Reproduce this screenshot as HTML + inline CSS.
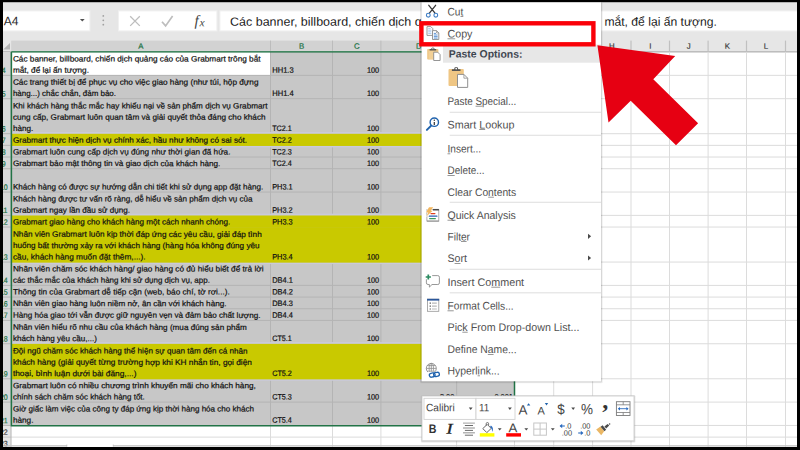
<!DOCTYPE html>
<html lang="vi"><head><meta charset="utf-8"><title>Excel - Copy</title>
<style>
html,body{margin:0;padding:0;background:#000;}
body{width:800px;height:450px;overflow:hidden;}
svg{display:block;font-family:"Liberation Sans",sans-serif;}
text{white-space:pre;}
.u{text-decoration:underline;text-decoration-thickness:0.7px;text-underline-offset:0.9px;}
</style></head><body>
<svg width="800" height="450" viewBox="0 0 800 450">
<rect x="0" y="0" width="800" height="450" fill="#000"/>
<rect x="3" y="2.5" width="794" height="444.5" fill="#fff"/>
<rect x="3" y="2.5" width="794" height="48.5" fill="#e6e6e6"/>
<rect x="1" y="10.9" width="88.9" height="20" fill="#fff" stroke="#f0f0f0" stroke-width="1"/>
<text transform="translate(3.8,25.2) rotate(.03) scale(0.98,1)" font-size="12.3" fill="#2b2b2b">A4</text>
<path d="M79.9 18.9h4.8l-2.4 2.7z" fill="#505050"/>
<rect x="102.4" y="15" width="1.8" height="1.8" fill="#a0a0a0" rx="0.9"/>
<rect x="102.4" y="19.4" width="1.8" height="1.8" fill="#a0a0a0" rx="0.9"/>
<rect x="102.4" y="23.8" width="1.8" height="1.8" fill="#a0a0a0" rx="0.9"/>
<rect x="118.5" y="10.9" width="98.4" height="20" fill="#fff" stroke="#f0f0f0" stroke-width="1"/>
<path d="M130.2 16.3l9.6 9.6M139.8 16.3l-9.6 9.6" stroke="#bdbdbd" stroke-width="1.3" fill="none"/>
<path d="M162 21.7l3.6 4.2 7-9.8" stroke="#bdbdbd" stroke-width="1.7" fill="none"/>
<text transform="translate(194.6,25.6) rotate(.03) scale(1,1)" font-size="15" fill="#444" font-family="Liberation Serif, serif" font-style="italic">f<tspan font-size="11.6" dx="0.7" dy="0.6">x</tspan></text>
<rect x="219.9" y="10.9" width="579.1" height="20" fill="#fff" stroke="#f0f0f0" stroke-width="1"/>
<clipPath id="fc"><rect x="225" y="11" width="374" height="20"/></clipPath>
<g clip-path="url(#fc)">
<text transform="translate(230,25.7) rotate(.03) scale(1.0416,1)" font-size="12" fill="#222">Các banner, billboard, chiến dịch quảng cáo của Grabmart trông bắt</text>
</g>
<text transform="translate(604.4,25.7) rotate(.03) scale(1.0117,1)" font-size="12" fill="#222">mắt, để lại ấn tượng.</text>
<rect x="11.2" y="40.6" width="503.3" height="10.2" fill="#d2d2d2"/>
<path d="M10 42.9v6.7H3.2z" fill="#b2b2b2"/>
<rect x="514.5" y="51.1" width="282.5" height="1.4" fill="#b6b6b6"/>
<rect x="3" y="51.1" width="8.2" height="1.4" fill="#b6b6b6"/>
<rect x="270" y="40.6" width="1" height="10.2" fill="#bcbcbc"/>
<rect x="332" y="40.6" width="1" height="10.2" fill="#bcbcbc"/>
<rect x="380.4" y="40.6" width="1" height="10.2" fill="#bcbcbc"/>
<rect x="456.1" y="40.6" width="1" height="10.2" fill="#bcbcbc"/>
<text transform="translate(140.85,48.8) rotate(.03) scale(1,1)" font-size="7.8" fill="#217346" text-anchor="middle" stroke="#217346" stroke-width="0.2">A</text>
<text transform="translate(301.5,48.8) rotate(.03) scale(1,1)" font-size="7.8" fill="#217346" text-anchor="middle" stroke="#217346" stroke-width="0.2">B</text>
<text transform="translate(356.7,48.8) rotate(.03) scale(1,1)" font-size="7.8" fill="#217346" text-anchor="middle" stroke="#217346" stroke-width="0.2">C</text>
<text transform="translate(418.75,48.8) rotate(.03) scale(1,1)" font-size="7.8" fill="#217346" text-anchor="middle" stroke="#217346" stroke-width="0.2">D</text>
<text transform="translate(485.55,48.8) rotate(.03) scale(1,1)" font-size="7.8" fill="#217346" text-anchor="middle" stroke="#217346" stroke-width="0.2">E</text>
<text transform="translate(534.1,48.8) rotate(.03) scale(1,1)" font-size="7.8" fill="#3c3c3c" text-anchor="middle" stroke="#3c3c3c" stroke-width="0.2">F</text>
<rect x="553.1" y="40.6" width="1.2" height="10.6" fill="#c0c0c0"/>
<text transform="translate(573.15,48.8) rotate(.03) scale(1,1)" font-size="7.8" fill="#3c3c3c" text-anchor="middle" stroke="#3c3c3c" stroke-width="0.2">G</text>
<rect x="592" y="40.6" width="1.2" height="10.6" fill="#c0c0c0"/>
<text transform="translate(611.8,48.8) rotate(.03) scale(1,1)" font-size="7.8" fill="#3c3c3c" text-anchor="middle" stroke="#3c3c3c" stroke-width="0.2">H</text>
<rect x="630.4" y="40.6" width="1.2" height="10.6" fill="#c0c0c0"/>
<text transform="translate(650.25,48.8) rotate(.03) scale(1,1)" font-size="7.8" fill="#3c3c3c" text-anchor="middle" stroke="#3c3c3c" stroke-width="0.2">I</text>
<rect x="668.9" y="40.6" width="1.2" height="10.6" fill="#c0c0c0"/>
<text transform="translate(688.8,48.8) rotate(.03) scale(1,1)" font-size="7.8" fill="#3c3c3c" text-anchor="middle" stroke="#3c3c3c" stroke-width="0.2">J</text>
<rect x="707.5" y="40.6" width="1.2" height="10.6" fill="#c0c0c0"/>
<text transform="translate(727.3,48.8) rotate(.03) scale(1,1)" font-size="7.8" fill="#3c3c3c" text-anchor="middle" stroke="#3c3c3c" stroke-width="0.2">K</text>
<rect x="745.9" y="40.6" width="1.2" height="10.6" fill="#c0c0c0"/>
<text transform="translate(766,48.8) rotate(.03) scale(1,1)" font-size="7.8" fill="#3c3c3c" text-anchor="middle" stroke="#3c3c3c" stroke-width="0.2">L</text>
<rect x="784.9" y="40.6" width="1.2" height="10.6" fill="#c0c0c0"/>
<rect x="3" y="52" width="8.2" height="373.44" fill="#d8d8d8"/>
<rect x="3" y="425.44" width="8.2" height="21.56" fill="#e6e6e6"/>
<rect x="11.2" y="52" width="503.3" height="373.44" fill="#c7c7c7"/>
<rect x="11.2" y="74.84" width="503.3" height="1" fill="#b4b4b4"/>
<rect x="11.2" y="98.18" width="503.3" height="1" fill="#b4b4b4"/>
<rect x="11.2" y="133.19" width="503.3" height="1" fill="#b4b4b4"/>
<rect x="11.2" y="144.86" width="503.3" height="1" fill="#b4b4b4"/>
<rect x="11.2" y="156.53" width="503.3" height="1" fill="#b4b4b4"/>
<rect x="11.2" y="168.2" width="503.3" height="1" fill="#b4b4b4"/>
<rect x="11.2" y="191.54" width="503.3" height="1" fill="#b4b4b4"/>
<rect x="11.2" y="214.88" width="503.3" height="1" fill="#b4b4b4"/>
<rect x="11.2" y="226.55" width="503.3" height="1" fill="#b4b4b4"/>
<rect x="11.2" y="261.56" width="503.3" height="1" fill="#b4b4b4"/>
<rect x="11.2" y="284.9" width="503.3" height="1" fill="#b4b4b4"/>
<rect x="11.2" y="296.57" width="503.3" height="1" fill="#b4b4b4"/>
<rect x="11.2" y="308.24" width="503.3" height="1" fill="#b4b4b4"/>
<rect x="11.2" y="319.91" width="503.3" height="1" fill="#b4b4b4"/>
<rect x="11.2" y="343.25" width="503.3" height="1" fill="#b4b4b4"/>
<rect x="11.2" y="378.26" width="503.3" height="1" fill="#b4b4b4"/>
<rect x="11.2" y="401.6" width="503.3" height="1" fill="#b4b4b4"/>
<rect x="270" y="52" width="1" height="373.44" fill="#b4b4b4"/>
<rect x="332" y="52" width="1" height="373.44" fill="#b4b4b4"/>
<rect x="380.4" y="52" width="1" height="373.44" fill="#b4b4b4"/>
<rect x="456.1" y="52" width="1" height="373.44" fill="#b4b4b4"/>
<rect x="11.2" y="131.99" width="503.3" height="15.37" fill="#cacada"/>
<rect x="11.2" y="213.68" width="503.3" height="15.37" fill="#cacada"/>
<rect x="11.2" y="225.35" width="503.3" height="38.71" fill="#cacada"/>
<rect x="11.2" y="342.05" width="503.3" height="38.71" fill="#cacada"/>
<rect x="11.2" y="133.79" width="503.3" height="12.17" fill="#c9c900"/>
<rect x="11.2" y="215.48" width="503.3" height="12.17" fill="#c9c900"/>
<rect x="11.2" y="227.15" width="503.3" height="35.51" fill="#c9c900"/>
<rect x="11.2" y="343.85" width="503.3" height="35.51" fill="#c9c900"/>
<rect x="11.2" y="52" width="258.8" height="22.84" fill="#fff"/>
<rect x="514.5" y="74.84" width="282.5" height="1" fill="#dcdcdc"/>
<rect x="514.5" y="98.18" width="282.5" height="1" fill="#dcdcdc"/>
<rect x="514.5" y="133.19" width="282.5" height="1" fill="#dcdcdc"/>
<rect x="514.5" y="144.86" width="282.5" height="1" fill="#dcdcdc"/>
<rect x="514.5" y="156.53" width="282.5" height="1" fill="#dcdcdc"/>
<rect x="514.5" y="168.2" width="282.5" height="1" fill="#dcdcdc"/>
<rect x="514.5" y="191.54" width="282.5" height="1" fill="#dcdcdc"/>
<rect x="514.5" y="214.88" width="282.5" height="1" fill="#dcdcdc"/>
<rect x="514.5" y="226.55" width="282.5" height="1" fill="#dcdcdc"/>
<rect x="514.5" y="261.56" width="282.5" height="1" fill="#dcdcdc"/>
<rect x="514.5" y="284.9" width="282.5" height="1" fill="#dcdcdc"/>
<rect x="514.5" y="296.57" width="282.5" height="1" fill="#dcdcdc"/>
<rect x="514.5" y="308.24" width="282.5" height="1" fill="#dcdcdc"/>
<rect x="514.5" y="319.91" width="282.5" height="1" fill="#dcdcdc"/>
<rect x="514.5" y="343.25" width="282.5" height="1" fill="#dcdcdc"/>
<rect x="514.5" y="378.26" width="282.5" height="1" fill="#dcdcdc"/>
<rect x="514.5" y="401.6" width="282.5" height="1" fill="#dcdcdc"/>
<rect x="514.5" y="424.94" width="282.5" height="1" fill="#dcdcdc"/>
<rect x="514.5" y="436.61" width="282.5" height="1" fill="#dcdcdc"/>
<rect x="514.5" y="447.98" width="282.5" height="1" fill="#dcdcdc"/>
<rect x="553.2" y="52" width="1" height="395" fill="#dcdcdc"/>
<rect x="592.1" y="52" width="1" height="395" fill="#dcdcdc"/>
<rect x="630.5" y="52" width="1" height="395" fill="#dcdcdc"/>
<rect x="669" y="52" width="1" height="395" fill="#dcdcdc"/>
<rect x="707.6" y="52" width="1" height="395" fill="#dcdcdc"/>
<rect x="746" y="52" width="1" height="395" fill="#dcdcdc"/>
<rect x="785" y="52" width="1" height="395" fill="#dcdcdc"/>
<rect x="11.2" y="436.61" width="503.3" height="1" fill="#dcdcdc"/>
<rect x="11.2" y="447.98" width="503.3" height="1" fill="#dcdcdc"/>
<rect x="270" y="425.44" width="1" height="21.56" fill="#dcdcdc"/>
<rect x="332" y="425.44" width="1" height="21.56" fill="#dcdcdc"/>
<rect x="380.4" y="425.44" width="1" height="21.56" fill="#dcdcdc"/>
<rect x="456.1" y="425.44" width="1" height="21.56" fill="#dcdcdc"/>
<rect x="514" y="425.44" width="1" height="21.56" fill="#dcdcdc"/>
<rect x="3" y="74.84" width="8.2" height="1" fill="#b6b6b6"/>
<text transform="translate(3.8,73.04) rotate(.03) scale(0.9,1)" font-size="7.8" fill="#217346" text-anchor="middle" stroke="#217346" stroke-width="0.2">4</text>
<rect x="3" y="98.18" width="8.2" height="1" fill="#b6b6b6"/>
<text transform="translate(3.8,96.38) rotate(.03) scale(0.9,1)" font-size="7.8" fill="#217346" text-anchor="middle" stroke="#217346" stroke-width="0.2">5</text>
<rect x="3" y="133.19" width="8.2" height="1" fill="#b6b6b6"/>
<text transform="translate(3.8,131.39) rotate(.03) scale(0.9,1)" font-size="7.8" fill="#217346" text-anchor="middle" stroke="#217346" stroke-width="0.2">6</text>
<rect x="3" y="144.86" width="8.2" height="1" fill="#b6b6b6"/>
<text transform="translate(3.8,143.06) rotate(.03) scale(0.9,1)" font-size="7.8" fill="#217346" text-anchor="middle" stroke="#217346" stroke-width="0.2">7</text>
<rect x="3" y="156.53" width="8.2" height="1" fill="#b6b6b6"/>
<text transform="translate(3.8,154.73) rotate(.03) scale(0.9,1)" font-size="7.8" fill="#217346" text-anchor="middle" stroke="#217346" stroke-width="0.2">8</text>
<rect x="3" y="168.2" width="8.2" height="1" fill="#b6b6b6"/>
<text transform="translate(3.8,166.4) rotate(.03) scale(0.9,1)" font-size="7.8" fill="#217346" text-anchor="middle" stroke="#217346" stroke-width="0.2">9</text>
<rect x="3" y="191.54" width="8.2" height="1" fill="#b6b6b6"/>
<text transform="translate(3.8,189.74) rotate(.03) scale(0.9,1)" font-size="7.8" fill="#217346" text-anchor="middle" stroke="#217346" stroke-width="0.2">10</text>
<rect x="3" y="214.88" width="8.2" height="1" fill="#b6b6b6"/>
<text transform="translate(3.8,213.08) rotate(.03) scale(0.9,1)" font-size="7.8" fill="#217346" text-anchor="middle" stroke="#217346" stroke-width="0.2">11</text>
<rect x="3" y="226.55" width="8.2" height="1" fill="#b6b6b6"/>
<text transform="translate(3.8,224.75) rotate(.03) scale(0.9,1)" font-size="7.8" fill="#217346" text-anchor="middle" stroke="#217346" stroke-width="0.2">12</text>
<rect x="3" y="261.56" width="8.2" height="1" fill="#b6b6b6"/>
<text transform="translate(3.8,259.76) rotate(.03) scale(0.9,1)" font-size="7.8" fill="#217346" text-anchor="middle" stroke="#217346" stroke-width="0.2">13</text>
<rect x="3" y="284.9" width="8.2" height="1" fill="#b6b6b6"/>
<text transform="translate(3.8,283.1) rotate(.03) scale(0.9,1)" font-size="7.8" fill="#217346" text-anchor="middle" stroke="#217346" stroke-width="0.2">14</text>
<rect x="3" y="296.57" width="8.2" height="1" fill="#b6b6b6"/>
<text transform="translate(3.8,294.77) rotate(.03) scale(0.9,1)" font-size="7.8" fill="#217346" text-anchor="middle" stroke="#217346" stroke-width="0.2">15</text>
<rect x="3" y="308.24" width="8.2" height="1" fill="#b6b6b6"/>
<text transform="translate(3.8,306.44) rotate(.03) scale(0.9,1)" font-size="7.8" fill="#217346" text-anchor="middle" stroke="#217346" stroke-width="0.2">16</text>
<rect x="3" y="319.91" width="8.2" height="1" fill="#b6b6b6"/>
<text transform="translate(3.8,318.11) rotate(.03) scale(0.9,1)" font-size="7.8" fill="#217346" text-anchor="middle" stroke="#217346" stroke-width="0.2">17</text>
<rect x="3" y="343.25" width="8.2" height="1" fill="#b6b6b6"/>
<text transform="translate(3.8,341.45) rotate(.03) scale(0.9,1)" font-size="7.8" fill="#217346" text-anchor="middle" stroke="#217346" stroke-width="0.2">18</text>
<rect x="3" y="378.26" width="8.2" height="1" fill="#b6b6b6"/>
<text transform="translate(3.8,376.46) rotate(.03) scale(0.9,1)" font-size="7.8" fill="#217346" text-anchor="middle" stroke="#217346" stroke-width="0.2">19</text>
<rect x="3" y="401.6" width="8.2" height="1" fill="#b6b6b6"/>
<text transform="translate(3.8,399.8) rotate(.03) scale(0.9,1)" font-size="7.8" fill="#217346" text-anchor="middle" stroke="#217346" stroke-width="0.2">20</text>
<rect x="3" y="424.94" width="8.2" height="1" fill="#b6b6b6"/>
<text transform="translate(3.8,423.14) rotate(.03) scale(0.9,1)" font-size="7.8" fill="#217346" text-anchor="middle" stroke="#217346" stroke-width="0.2">21</text>
<rect x="3" y="436.61" width="8.2" height="1" fill="#c6c6c6"/>
<text transform="translate(3.8,434.81) rotate(.03) scale(0.9,1)" font-size="7.8" fill="#3c3c3c" text-anchor="middle" stroke="#3c3c3c" stroke-width="0.2">22</text>
<rect x="3" y="447.98" width="8.2" height="1" fill="#c6c6c6"/>
<text transform="translate(3.8,446.18) rotate(.03) scale(0.9,1)" font-size="7.8" fill="#3c3c3c" text-anchor="middle" stroke="#3c3c3c" stroke-width="0.2">23</text>
<rect x="10.5" y="52" width="1" height="395" fill="#b6b6b6"/>
<rect x="0" y="0" width="3" height="450" fill="#000"/>
<text transform="translate(12.9,61.39) rotate(.03) scale(1.0442,1)" font-size="7.9" fill="#101010" stroke="#101010" stroke-width="0.2">Các banner, billboard, chiến dịch quảng cáo của Grabmart trông bắt</text>
<text transform="translate(12.9,72.69) rotate(.03) scale(1.0387,1)" font-size="7.9" fill="#101010" stroke="#101010" stroke-width="0.2">mắt, để lại ấn tượng.</text>
<text transform="translate(272.2,72.69) rotate(.03) scale(0.9601,1)" font-size="7.9" fill="#101010" stroke="#101010" stroke-width="0.2">HH1.3</text>
<text transform="translate(379.2,72.69) rotate(.03) scale(0.935,1)" font-size="7.9" fill="#101010" text-anchor="end" stroke="#101010" stroke-width="0.2">100</text>
<text transform="translate(12.9,84.73) rotate(.03) scale(1.0414,1)" font-size="7.9" fill="#101010" stroke="#101010" stroke-width="0.2">Các trang thiết bị để phục vụ cho việc giao hàng (như túi, hộp đựng</text>
<text transform="translate(12.9,96.03) rotate(.03) scale(1.0095,1)" font-size="7.9" fill="#101010" stroke="#101010" stroke-width="0.2">hàng...) chắc chắn, đảm bảo.</text>
<text transform="translate(272.2,96.03) rotate(.03) scale(0.9601,1)" font-size="7.9" fill="#101010" stroke="#101010" stroke-width="0.2">HH1.4</text>
<text transform="translate(379.2,96.03) rotate(.03) scale(0.935,1)" font-size="7.9" fill="#101010" text-anchor="end" stroke="#101010" stroke-width="0.2">100</text>
<text transform="translate(12.9,108.44) rotate(.03) scale(1.03,1)" font-size="7.9" fill="#101010" stroke="#101010" stroke-width="0.2">Khi khách hàng thắc mắc hay khiếu nại về sản phẩm dịch vụ Grabmart</text>
<text transform="translate(12.9,119.74) rotate(.03) scale(1.0365,1)" font-size="7.9" fill="#101010" stroke="#101010" stroke-width="0.2">cung cấp, Grabmart luôn quan tâm và giải quyết thỏa đáng cho khách</text>
<text transform="translate(12.9,131.04) rotate(.03) scale(1.0319,1)" font-size="7.9" fill="#101010" stroke="#101010" stroke-width="0.2">hàng.</text>
<text transform="translate(272.2,131.04) rotate(.03) scale(0.9111,1)" font-size="7.9" fill="#101010" stroke="#101010" stroke-width="0.2">TC2.1</text>
<text transform="translate(379.2,131.04) rotate(.03) scale(0.935,1)" font-size="7.9" fill="#101010" text-anchor="end" stroke="#101010" stroke-width="0.2">100</text>
<text transform="translate(12.9,142.71) rotate(.03) scale(1.0332,1)" font-size="7.9" fill="#101010" stroke="#101010" stroke-width="0.2">Grabmart thực hiện dịch vụ chính xác, hầu như không có sai sót.</text>
<text transform="translate(272.2,142.71) rotate(.03) scale(0.9111,1)" font-size="7.9" fill="#101010" stroke="#101010" stroke-width="0.2">TC2.2</text>
<text transform="translate(379.2,142.71) rotate(.03) scale(0.935,1)" font-size="7.9" fill="#101010" text-anchor="end" stroke="#101010" stroke-width="0.2">100</text>
<text transform="translate(12.9,154.38) rotate(.03) scale(1.0358,1)" font-size="7.9" fill="#101010" stroke="#101010" stroke-width="0.2">Grabmart luôn cung cấp dịch vụ đúng như thời gian đã hứa.</text>
<text transform="translate(272.2,154.38) rotate(.03) scale(0.9111,1)" font-size="7.9" fill="#101010" stroke="#101010" stroke-width="0.2">TC2.3</text>
<text transform="translate(379.2,154.38) rotate(.03) scale(0.935,1)" font-size="7.9" fill="#101010" text-anchor="end" stroke="#101010" stroke-width="0.2">100</text>
<text transform="translate(12.9,166.05) rotate(.03) scale(1.0334,1)" font-size="7.9" fill="#101010" stroke="#101010" stroke-width="0.2">Grabmart bảo mật thông tin và giao dịch của khách hàng.</text>
<text transform="translate(272.2,166.05) rotate(.03) scale(0.9111,1)" font-size="7.9" fill="#101010" stroke="#101010" stroke-width="0.2">TC2.4</text>
<text transform="translate(379.2,166.05) rotate(.03) scale(0.935,1)" font-size="7.9" fill="#101010" text-anchor="end" stroke="#101010" stroke-width="0.2">100</text>
<text transform="translate(12.9,189.39) rotate(.03) scale(1.0222,1)" font-size="7.9" fill="#101010" stroke="#101010" stroke-width="0.2">Khách hàng có được sự hướng dẫn chi tiết khi sử dụng app đặt hàng.</text>
<text transform="translate(272.2,189.39) rotate(.03) scale(0.9337,1)" font-size="7.9" fill="#101010" stroke="#101010" stroke-width="0.2">PH3.1</text>
<text transform="translate(379.2,189.39) rotate(.03) scale(0.935,1)" font-size="7.9" fill="#101010" text-anchor="end" stroke="#101010" stroke-width="0.2">100</text>
<text transform="translate(12.9,201.43) rotate(.03) scale(1.0221,1)" font-size="7.9" fill="#101010" stroke="#101010" stroke-width="0.2">Khách hàng được tư vấn rõ ràng, dễ hiểu về sản phẩm dịch vụ của</text>
<text transform="translate(12.9,212.73) rotate(.03) scale(1.0254,1)" font-size="7.9" fill="#101010" stroke="#101010" stroke-width="0.2">Grabmart ngay lần đầu sử dụng.</text>
<text transform="translate(272.2,212.73) rotate(.03) scale(0.9337,1)" font-size="7.9" fill="#101010" stroke="#101010" stroke-width="0.2">PH3.2</text>
<text transform="translate(379.2,212.73) rotate(.03) scale(0.935,1)" font-size="7.9" fill="#101010" text-anchor="end" stroke="#101010" stroke-width="0.2">100</text>
<text transform="translate(12.9,224.4) rotate(.03) scale(1.0237,1)" font-size="7.9" fill="#101010" stroke="#101010" stroke-width="0.2">Grabmart giao hàng cho khách hàng một cách nhanh chóng.</text>
<text transform="translate(272.2,224.4) rotate(.03) scale(0.9337,1)" font-size="7.9" fill="#101010" stroke="#101010" stroke-width="0.2">PH3.3</text>
<text transform="translate(379.2,224.4) rotate(.03) scale(0.935,1)" font-size="7.9" fill="#101010" text-anchor="end" stroke="#101010" stroke-width="0.2">100</text>
<text transform="translate(12.9,236.81) rotate(.03) scale(1.0392,1)" font-size="7.9" fill="#101010" stroke="#101010" stroke-width="0.2">Nhân viên Grabmart luôn kịp thời đáp ứng các yêu cầu, giải đáp tình</text>
<text transform="translate(12.9,248.11) rotate(.03) scale(1.033,1)" font-size="7.9" fill="#101010" stroke="#101010" stroke-width="0.2">huống bất thường xảy ra với khách hàng (hàng hóa không đúng yêu</text>
<text transform="translate(12.9,259.41) rotate(.03) scale(1.0504,1)" font-size="7.9" fill="#101010" stroke="#101010" stroke-width="0.2">cầu, khách hàng muốn đặt thêm,...).</text>
<text transform="translate(272.2,259.41) rotate(.03) scale(0.9337,1)" font-size="7.9" fill="#101010" stroke="#101010" stroke-width="0.2">PH3.4</text>
<text transform="translate(379.2,259.41) rotate(.03) scale(0.935,1)" font-size="7.9" fill="#101010" text-anchor="end" stroke="#101010" stroke-width="0.2">100</text>
<text transform="translate(12.9,271.45) rotate(.03) scale(1.0427,1)" font-size="7.9" fill="#101010" stroke="#101010" stroke-width="0.2">Nhân viên chăm sóc khách hàng/ giao hàng có đủ hiểu biết để trả lời</text>
<text transform="translate(12.9,282.75) rotate(.03) scale(1.0107,1)" font-size="7.9" fill="#101010" stroke="#101010" stroke-width="0.2">các thắc mắc của khách hàng khi sử dụng dịch vụ, app.</text>
<text transform="translate(272.2,282.75) rotate(.03) scale(0.9428,1)" font-size="7.9" fill="#101010" stroke="#101010" stroke-width="0.2">DB4.1</text>
<text transform="translate(379.2,282.75) rotate(.03) scale(0.935,1)" font-size="7.9" fill="#101010" text-anchor="end" stroke="#101010" stroke-width="0.2">100</text>
<text transform="translate(12.9,294.42) rotate(.03) scale(1.0396,1)" font-size="7.9" fill="#101010" stroke="#101010" stroke-width="0.2">Thông tin của Grabmart dễ tiếp cận (web, báo chí, tờ rơi...).</text>
<text transform="translate(272.2,294.42) rotate(.03) scale(0.9428,1)" font-size="7.9" fill="#101010" stroke="#101010" stroke-width="0.2">DB4.2</text>
<text transform="translate(379.2,294.42) rotate(.03) scale(0.935,1)" font-size="7.9" fill="#101010" text-anchor="end" stroke="#101010" stroke-width="0.2">100</text>
<text transform="translate(12.9,306.09) rotate(.03) scale(1.0337,1)" font-size="7.9" fill="#101010" stroke="#101010" stroke-width="0.2">Nhân viên giao hàng luôn niềm nở, ân cần với khách hàng.</text>
<text transform="translate(272.2,306.09) rotate(.03) scale(0.9428,1)" font-size="7.9" fill="#101010" stroke="#101010" stroke-width="0.2">DB4.3</text>
<text transform="translate(379.2,306.09) rotate(.03) scale(0.935,1)" font-size="7.9" fill="#101010" text-anchor="end" stroke="#101010" stroke-width="0.2">100</text>
<text transform="translate(12.9,317.76) rotate(.03) scale(1.0259,1)" font-size="7.9" fill="#101010" stroke="#101010" stroke-width="0.2">Hàng hóa giao tới vẫn được giữ nguyên vẹn và đảm bảo chất lượng.</text>
<text transform="translate(272.2,317.76) rotate(.03) scale(0.9428,1)" font-size="7.9" fill="#101010" stroke="#101010" stroke-width="0.2">DB4.4</text>
<text transform="translate(379.2,317.76) rotate(.03) scale(0.935,1)" font-size="7.9" fill="#101010" text-anchor="end" stroke="#101010" stroke-width="0.2">100</text>
<text transform="translate(12.9,329.8) rotate(.03) scale(1.031,1)" font-size="7.9" fill="#101010" stroke="#101010" stroke-width="0.2">Nhân viên hiểu rõ nhu cầu của khách hàng (mua đúng sản phẩm</text>
<text transform="translate(12.9,341.1) rotate(.03) scale(1.0241,1)" font-size="7.9" fill="#101010" stroke="#101010" stroke-width="0.2">khách hàng yêu cầu,...)</text>
<text transform="translate(272.2,341.1) rotate(.03) scale(0.9111,1)" font-size="7.9" fill="#101010" stroke="#101010" stroke-width="0.2">CT5.1</text>
<text transform="translate(379.2,341.1) rotate(.03) scale(0.935,1)" font-size="7.9" fill="#101010" text-anchor="end" stroke="#101010" stroke-width="0.2">100</text>
<text transform="translate(12.9,353.51) rotate(.03) scale(1.0252,1)" font-size="7.9" fill="#101010" stroke="#101010" stroke-width="0.2">Đội ngũ chăm sóc khách hàng thể hiện sự quan tâm đến cá nhân</text>
<text transform="translate(12.9,364.81) rotate(.03) scale(1.0498,1)" font-size="7.9" fill="#101010" stroke="#101010" stroke-width="0.2">khách hàng (giải quyết từng trường hợp khi KH nhắn tin, gọi điện</text>
<text transform="translate(12.9,376.11) rotate(.03) scale(1.0603,1)" font-size="7.9" fill="#101010" stroke="#101010" stroke-width="0.2">thoại, bình luận dưới bài đăng,...)</text>
<text transform="translate(272.2,376.11) rotate(.03) scale(0.9111,1)" font-size="7.9" fill="#101010" stroke="#101010" stroke-width="0.2">CT5.2</text>
<text transform="translate(379.2,376.11) rotate(.03) scale(0.935,1)" font-size="7.9" fill="#101010" text-anchor="end" stroke="#101010" stroke-width="0.2">100</text>
<text transform="translate(12.9,388.15) rotate(.03) scale(1.0439,1)" font-size="7.9" fill="#101010" stroke="#101010" stroke-width="0.2">Grabmart luôn có nhiều chương trình khuyến mãi cho khách hàng,</text>
<text transform="translate(12.9,399.45) rotate(.03) scale(1.0128,1)" font-size="7.9" fill="#101010" stroke="#101010" stroke-width="0.2">chính sách chăm sóc khách hàng tốt.</text>
<text transform="translate(272.2,399.45) rotate(.03) scale(0.9111,1)" font-size="7.9" fill="#101010" stroke="#101010" stroke-width="0.2">CT5.3</text>
<text transform="translate(379.2,399.45) rotate(.03) scale(0.935,1)" font-size="7.9" fill="#101010" text-anchor="end" stroke="#101010" stroke-width="0.2">100</text>
<text transform="translate(12.9,411.49) rotate(.03) scale(1.0214,1)" font-size="7.9" fill="#101010" stroke="#101010" stroke-width="0.2">Giờ giấc làm việc của công ty đáp ứng kịp thời hàng hóa cho khách</text>
<text transform="translate(12.9,422.79) rotate(.03) scale(1.042,1)" font-size="7.9" fill="#101010" stroke="#101010" stroke-width="0.2">hàng.</text>
<text transform="translate(272.2,422.79) rotate(.03) scale(0.9111,1)" font-size="7.9" fill="#101010" stroke="#101010" stroke-width="0.2">CT5.4</text>
<text transform="translate(379.2,422.79) rotate(.03) scale(0.935,1)" font-size="7.9" fill="#101010" text-anchor="end" stroke="#101010" stroke-width="0.2">100</text>
<text transform="translate(454.3,399.45) rotate(.03) scale(0.935,1)" font-size="7.9" fill="#101010" text-anchor="end" stroke="#101010" stroke-width="0.2">3.00</text>
<text transform="translate(512.9,399.45) rotate(.03) scale(0.935,1)" font-size="7.9" fill="#101010" text-anchor="end" stroke="#101010" stroke-width="0.2">0.001</text>
<rect x="11.2" y="51.15" width="503.3" height="1.4" fill="#217346"/>
<path d="M11.4 52V425.74H514.5V52" fill="none" stroke="#217346" stroke-width="1.5"/>
<rect x="3" y="445.2" width="64" height="1.3" fill="#c2c2c2"/>
<rect x="113" y="445.2" width="684" height="1.3" fill="#c2c2c2"/>
<rect x="66.3" y="444.6" width="1" height="1.9" fill="#c2c2c2"/>
<rect x="112.8" y="444.6" width="1" height="1.9" fill="#c2c2c2"/>
<rect x="797" y="0" width="3" height="450" fill="#000"/>
<rect x="0" y="447" width="800" height="3" fill="#000"/>
<rect x="420" y="2.5" width="182.8" height="380.8" fill="rgba(0,0,0,0.06)" rx="1"/>
<rect x="420.6" y="2.5" width="181.4" height="380" fill="rgba(0,0,0,0.10)" rx="1"/>
<rect x="421.6" y="2.5" width="179.4" height="378.8" fill="#fff"/>
<rect x="443" y="44.5" width="158" height="18.2" fill="#e7e7e7"/>
<text transform="translate(447.5,15.4) rotate(.03) scale(0.923,1)" font-size="11" fill="#505050">Cut</text>
<rect x="460.48" y="16.3" width="2.82" height="0.7" fill="#6a6a6a"/>
<text transform="translate(447.5,37.6) rotate(.03) scale(0.9735,1)" font-size="11" fill="#505050">Copy</text>
<rect x="447.5" y="38.5" width="7.73" height="0.7" fill="#6a6a6a"/>
<text transform="translate(448.8,57.6) rotate(.03) scale(0.9853,1)" font-size="10.6" fill="#3f4650" font-weight="bold">Paste Options:</text>
<text transform="translate(447.5,104.9) rotate(.03) scale(0.8995,1)" font-size="11" fill="#505050">Paste Special...</text>
<rect x="475.55" y="105.8" width="6.6" height="0.7" fill="#6a6a6a"/>
<text transform="translate(447.5,128.4) rotate(.03) scale(0.9784,1)" font-size="11" fill="#505050">Smart Lookup</text>
<rect x="479.19" y="129.3" width="5.99" height="0.7" fill="#6a6a6a"/>
<text transform="translate(447.5,152.6) rotate(.03) scale(0.9201,1)" font-size="11" fill="#505050">Insert...</text>
<rect x="447.5" y="153.5" width="2.81" height="0.7" fill="#6a6a6a"/>
<text transform="translate(447.5,174.1) rotate(.03) scale(0.9032,1)" font-size="11" fill="#505050">Delete...</text>
<rect x="447.5" y="175" width="7.17" height="0.7" fill="#6a6a6a"/>
<text transform="translate(447.5,195.9) rotate(.03) scale(0.937,1)" font-size="11" fill="#505050">Clear Contents</text>
<rect x="488.17" y="196.8" width="5.73" height="0.7" fill="#6a6a6a"/>
<text transform="translate(447.5,218.9) rotate(.03) scale(0.9542,1)" font-size="11" fill="#505050">Quick Analysis</text>
<rect x="447.5" y="219.8" width="8.16" height="0.7" fill="#6a6a6a"/>
<text transform="translate(447.5,240.4) rotate(.03) scale(0.9205,1)" font-size="11" fill="#505050">Filter</text>
<rect x="461" y="241.3" width="5.63" height="0.7" fill="#6a6a6a"/>
<text transform="translate(447.5,262.1) rotate(.03) scale(0.9666,1)" font-size="11" fill="#505050">Sort</text>
<rect x="454.59" y="263" width="5.91" height="0.7" fill="#6a6a6a"/>
<text transform="translate(447.5,285.9) rotate(.03) scale(0.9809,1)" font-size="11" fill="#505050">Insert Comment</text>
<rect x="491.28" y="286.8" width="8.99" height="0.7" fill="#6a6a6a"/>
<text transform="translate(447.5,309.6) rotate(.03) scale(0.9264,1)" font-size="11" fill="#505050">Format Cells...</text>
<rect x="447.5" y="310.5" width="6.22" height="0.7" fill="#6a6a6a"/>
<text transform="translate(447.5,330.9) rotate(.03) scale(0.9727,1)" font-size="11" fill="#505050">Pick From Drop-down List...</text>
<rect x="462.36" y="331.8" width="5.35" height="0.7" fill="#6a6a6a"/>
<text transform="translate(447.5,353.1) rotate(.03) scale(0.9419,1)" font-size="11" fill="#505050">Define Name...</text>
<rect x="487.81" y="354" width="5.76" height="0.7" fill="#6a6a6a"/>
<text transform="translate(447.5,374.6) rotate(.03) scale(0.947,1)" font-size="11" fill="#505050">Hyperlink...</text>
<rect x="477.6" y="375.5" width="2.31" height="0.7" fill="#6a6a6a"/>
<rect x="449.7" y="111.7" width="151.3" height="1.2" fill="#e3e3e3"/>
<rect x="449.7" y="134.7" width="151.3" height="1.2" fill="#e3e3e3"/>
<rect x="449.7" y="201.7" width="151.3" height="1.2" fill="#e3e3e3"/>
<rect x="449.7" y="268.7" width="151.3" height="1.2" fill="#e3e3e3"/>
<rect x="449.7" y="292.2" width="151.3" height="1.2" fill="#e3e3e3"/>
<path d="M588 233.7l3.1 2.6-3.1 2.6z" fill="#4a4a4a"/>
<path d="M588 255.4l3.1 2.6-3.1 2.6z" fill="#4a4a4a"/>
<g>
<!-- cut -->
<g fill="none" stroke-linecap="round">
<path d="M428.8 5.3l6 7.6M435.6 5.3l-6 7.6" stroke="#3a3a3a" stroke-width="1.3"/>
<circle cx="428.3" cy="15.2" r="1.9" stroke="#3b7cc4" stroke-width="1.1"/>
<circle cx="435.8" cy="15.2" r="1.9" stroke="#3b7cc4" stroke-width="1.1"/>
</g>
<!-- copy -->
<g>
<path d="M427 26.6h3.8l2 2v6.8H427z" fill="#fff" stroke="#8c8c8c" stroke-width="0.9"/>
<path d="M428.2 28.6h2.4M428.2 30.2h3.2M428.2 31.8h3.2M428.2 33.4h3.2" stroke="#a9c9ec" stroke-width="1"/>
<path d="M432.5 30.6h4l2.3 2.3v6.6h-6.3z" fill="#fff" stroke="#8c8c8c" stroke-width="0.9"/>
<path d="M436.5 30.6v2.3h2.3" fill="none" stroke="#8c8c8c" stroke-width="0.7"/>
<path d="M433.8 33.4h2.2M433.8 35h3.8M433.8 36.6h3.8M433.8 38.1h3.8" stroke="#4f8bd0" stroke-width="0.9"/>
</g>
<!-- paste small -->
<g>
<rect x="427.2" y="49" width="11.2" height="10.5" rx="0.8" fill="#efc684"/>
<rect x="428.6" y="50.6" width="8.4" height="8.9" fill="#f5d9a8" opacity="0.5"/>
<path d="M429.6 50.4v-1.3h1.6a1.7 1.7 0 0 1 3.4 0h1.6v1.3z" fill="#555"/><circle cx="432.9" cy="48.6" r="0.65" fill="#fff"/>
<path d="M433.7 52.2h4l2.4 2.4v5.9h-6.4z" fill="#fff" stroke="#8a8a8a" stroke-width="0.9"/>
</g>
<!-- paste big -->
<g>
<rect x="448.5" y="69" width="15.3" height="17" rx="1" fill="#efc684"/>
<path d="M451.9 70.9v-1.7h2.2a2.1 2.1 0 0 1 4.2 0h2.2v1.7z" fill="#555"/>
<circle cx="456.2" cy="68.6" r="0.85" fill="#fff"/>
<path d="M457.5 74.4h6.4l3.8 3.8v9.2h-10.2z" fill="#fff" stroke="#909090" stroke-width="1"/>
<path d="M463.9 74.4v3.8h3.8" fill="none" stroke="#909090" stroke-width="0.8"/>
</g>
<!-- smart lookup -->
<g fill="none">
<circle cx="434.3" cy="122.2" r="4.2" stroke="#1f62ad" stroke-width="1.4"/>
<path d="M431.2 125.6l-4.3 4.3" stroke="#1f62ad" stroke-width="2" stroke-linecap="round"/>
<path d="M434.3 122v3" stroke="#333" stroke-width="1.2"/>
<circle cx="434.3" cy="120.3" r="0.7" fill="#333"/>
</g>
<!-- quick analysis -->
<g>
<rect x="426.9" y="209.7" width="11.9" height="11.4" fill="#fff" stroke="#9a9a9a" stroke-width="0.8"/>
<path d="M433 209.7h5.9" stroke="#4a4a4a" stroke-width="1.5"/>
<path d="M427 221.1h11.8" stroke="#8a8a8a" stroke-width="0.9"/>
<path d="M429 207.2h4.2l-2.5 3.6h2l-6.4 5.7 2-4.1h-2.3z" fill="#f3b65e" stroke="#fff" stroke-width="0.7" paint-order="stroke"/>
<path d="M431 213.6h3.9" stroke="#e0401f" stroke-width="1.2" stroke-linecap="round"/>
<path d="M429.3 216.2h7.6" stroke="#2b5fb4" stroke-width="1.2" stroke-linecap="round"/>
<path d="M429.6 218.6h5.8" stroke="#3c9b5f" stroke-width="1.1" stroke-linecap="round"/>
</g>
<!-- insert comment -->
<g fill="none">
<path d="M432.2 275.6h5.6a1.6 1.6 0 0 1 1.6 1.6v5.7a1.6 1.6 0 0 1-1.6 1.6h-5.8l-2.6 2.6v-2.6h-1.4a1.6 1.6 0 0 1-1.6-1.6v-3.6" stroke="#8c8c8c" stroke-width="0.9"/>
<path d="M428.3 274.4v5.2M425.7 277h5.2" stroke="#2a8a60" stroke-width="1.7"/>
</g>
<!-- format cells -->
<g>
<rect x="427.5" y="299.2" width="11.3" height="12.1" fill="#fff" stroke="#969696" stroke-width="0.8"/>
<rect x="427.1" y="298.8" width="12.1" height="1.8" fill="#2b579a"/>
<path d="M429.6 303.1h1.3M429.6 306.1h1.3M429.6 309h1.3" stroke="#555" stroke-width="1.2"/>
<path d="M432 303.1h4.8M432 306.1h4.8M432 309h4.8" stroke="#b9b9b9" stroke-width="1.1"/>
</g>
<!-- hyperlink -->
<g fill="none">
<circle cx="431.3" cy="368.4" r="5" stroke="#8c8c8c" stroke-width="0.9"/>
<ellipse cx="431.3" cy="368.4" rx="2.2" ry="5" stroke="#8c8c8c" stroke-width="0.8"/>
<path d="M426.3 368.4h10M427.2 365.6h8.2M427.2 371.2h8.2M431.3 363.4v10" stroke="#8c8c8c" stroke-width="0.8"/>
<rect x="428" y="371.8" width="12.4" height="6" fill="#fff" stroke="none"/>
<rect x="429.3" y="373.1" width="5.8" height="3.9" rx="1.95" stroke="#1f62ad" stroke-width="1.3" transform="rotate(-12 432.2 375)"/>
<rect x="433.6" y="372.5" width="5.8" height="3.9" rx="1.95" stroke="#1f62ad" stroke-width="1.3" transform="rotate(-12 436.5 374.4)"/>
</g>
</g>

<rect x="421.4" y="23.3" width="172" height="21" fill="none" stroke="#fa0008" stroke-width="4.4"/>
<polygon points="597.4,45.2 675.2,55.9 653.3,79.3 698.1,123.3 676,145.2 630.7,100.7 608.5,122.5" fill="#e60012"/>
<rect x="420.8" y="395" width="214.8" height="47.7" fill="rgba(0,0,0,0.07)" rx="1.5"/>
<rect x="421.3" y="395.4" width="213.7" height="46.5" fill="rgba(0,0,0,0.10)" rx="1"/>
<rect x="422" y="396" width="212" height="44.7" fill="#fff" stroke="#d4d4d4" stroke-width="1"/>
<g>
<!-- combos -->
<rect x="424" y="398.3" width="52" height="21.1" fill="#fff" stroke="#d2d2d2" stroke-width="0.9"/>
<rect x="476" y="398.3" width="39" height="21.1" fill="#fff" stroke="#d2d2d2" stroke-width="0.9"/>
<path d="M468.8 407.6h3.8l-1.9 2.3z" fill="#4a4a4a"/>
<path d="M508 407.6h3.8l-1.9 2.3z" fill="#4a4a4a"/>
<!-- grow/shrink triangles -->
<path d="M526.9 405.6h3.4l-1.7-2.4z" fill="#1f62ad"/>
<path d="M544.8 403h3.4l-1.7 2.4z" fill="#1f62ad"/>
<!-- $ dropdown -->
<path d="M571.3 407.6h3.8l-1.9 2.3z" fill="#4a4a4a"/>
<!-- merge icon -->
<rect x="616.4" y="401.7" width="13.6" height="13.8" fill="#fff" stroke="#7a7a7a" stroke-width="0.9"/>
<path d="M616.4 404.8h13.6M616.4 412.5h13.6M623.2 401.7v3.1M623.2 412.5v3" stroke="#7a7a7a" stroke-width="0.8" fill="none"/>
<path d="M618.6 408.7h9.2" stroke="#2b6cc0" stroke-width="0.9"/>
<path d="M617.8 408.7l2.2-1.7v3.4zM628.6 408.7l-2.2-1.7v3.4z" fill="#2b6cc0"/>
<!-- align center -->
<path d="M463 423.1h11.9M463 428h11.9M463 432.8h11.9" stroke="#b4b4b4" stroke-width="1.4" fill="none"/><path d="M464.9 425.5h8.1M464.9 430.4h8.1M464.9 435.2h8.1" stroke="#5a5a5a" stroke-width="0.9" fill="none"/>
<!-- fill bucket -->
<rect x="479.8" y="433.2" width="14.6" height="3.4" fill="#ffff00"/>
<path d="M487.2 424.4l4 4-4.4 4.2-4-4z" fill="#fff" stroke="#555" stroke-width="0.9"/>
<path d="M486.2 425.6v-1.9a1.2 1.2 0 0 1 2.4 0v1.5" fill="none" stroke="#555" stroke-width="0.8"/>
<path d="M490.9 425.6c2.2 1.2 2.6 4 1.4 6.4-0.2-2-0.6-3.6-2.2-5.2z" fill="#2b6cc0"/>
<path d="M497.8 428.2h3.8l-1.9 2.3z" fill="#4a4a4a"/>
<!-- font color -->
<rect x="506.2" y="433.2" width="14.8" height="3.4" fill="#ff0000"/>
<path d="M524.4 428.2h3.8l-1.9 2.3z" fill="#4a4a4a"/>
<!-- borders -->
<rect x="533.8" y="423" width="12.6" height="12.2" fill="#fff" stroke="#c6c6c6" stroke-width="1"/>
<path d="M540.1 423v12.2M533.8 429.1h12.6" stroke="#c6c6c6" stroke-width="1"/>
<path d="M550.9 428.2h3.8l-1.9 2.3z" fill="#4a4a4a"/>
<!-- dec arrows -->
<path d="M560.2 426h4.6" stroke="#2b6cc0" stroke-width="1.1"/><path d="M559.6 426l2.6-2.2v4.4z" fill="#2b6cc0"/>
<path d="M578.2 433h4.2" stroke="#2b6cc0" stroke-width="1.1"/><path d="M583.4 433l-2.6-2.2v4.4z" fill="#2b6cc0"/>
<!-- format painter -->
<path d="M596.2 429.6l4.2-3 3.8 4.6-3 4z" fill="#eab765"/>
<path d="M600.6 426.8l2-1.5 3.6 4.4-1.8 1.6z" fill="#4a4a4a"/>
<path d="M604.4 426.6l3.2-2.6 1.6 1.6-3 2.8z" fill="#4a4a4a"/>
<circle cx="609.6" cy="424" r="0.8" fill="#4a4a4a"/>
</g>
<text transform="translate(426,411.3) rotate(.03) scale(0.9481,1)" font-size="10.7" fill="#444">Calibri</text>
<text transform="translate(479,411.3) rotate(.03) scale(0.9237,1)" font-size="10.7" fill="#444">11</text>
<text transform="translate(518.6,414.4) rotate(.03) scale(0.98,1)" font-size="13.6" fill="#444">A</text>
<text transform="translate(537.6,414.4) rotate(.03) scale(1.02,1)" font-size="10.8" fill="#444">A</text>
<text transform="translate(557.2,414.2) rotate(.03) scale(0.92,1)" font-size="14.6" fill="#444">$</text>
<text transform="translate(581,414.2) rotate(.03) scale(0.91,1)" font-size="14.8" fill="#444">%</text>
<text transform="translate(602.2,408.6) rotate(.03) scale(1,1)" font-size="24" fill="#333" font-weight="bold" font-family="Liberation Serif, serif">,</text>
<text transform="translate(428.8,433.1) rotate(.03) scale(0.86,1)" font-size="12.4" fill="#333" font-weight="bold">B</text>
<text transform="translate(446.6,433.5) rotate(.03) scale(1.25,1)" font-size="14.6" fill="#222" stroke="#222" stroke-width="0.35" font-family="Liberation Serif, serif" font-style="italic">I</text>
<text transform="translate(508.6,432.3) rotate(.03) scale(1.05,1)" font-size="12.6" fill="#444">A</text>
<text transform="translate(565.2,428.5) rotate(.03) scale(1,1)" font-size="7.4" fill="#444">.0</text>
<text transform="translate(561.8,435.4) rotate(.03) scale(1,1)" font-size="7.4" fill="#444">.00</text>
<text transform="translate(580.2,428.5) rotate(.03) scale(1,1)" font-size="7.4" fill="#444">.00</text>
<text transform="translate(584.2,435.4) rotate(.03) scale(1,1)" font-size="7.4" fill="#444">.0</text>
</svg>
</body></html>
